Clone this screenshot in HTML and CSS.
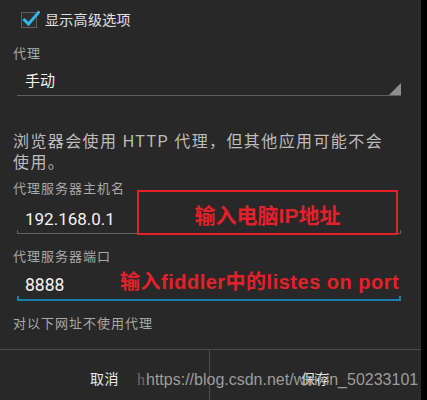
FILE: index.html
```html
<!DOCTYPE html>
<html lang="zh-CN">
<head>
<meta charset="utf-8">
<title>代理设置</title>
<link rel="stylesheet" href="styles.css">
</head>
<body>
<div class="screen">
  <div class="check-row">
    <svg class="checkbox" width="20" height="20" viewBox="0 0 20 20">
      <rect x="1.5" y="2.5" width="15" height="15" fill="#2e2e2e" stroke="#5c5c5c" stroke-width="1"/>
      <polyline points="4.5,10 8.5,14 18.5,2.5" fill="none" stroke="#33b5e5" stroke-width="3" stroke-linecap="square"/>
    </svg>
    <span class="check-label">显示高级选项</span>
  </div>

  <div class="label label-proxy">代理</div>
  <div class="spinner"><span class="spinner-value">手动</span></div>

  <p class="desc">浏览器会使用 HTTP 代理，但其他应用可能不会使用。</p>

  <div class="label label-host">代理服务器主机名</div>
  <div class="input">192.168.0.1</div>

  <div class="label label-port">代理服务器端口</div>
  <div class="input input-focused">8888</div>

  <div class="label label-exclude">对以下网址不使用代理</div>

  <div class="buttons">
    <div class="btn">取消</div>
    <div class="btn btn-right">保存</div>
  </div>

  <div class="note note-box">输入电脑IP地址</div>
  <div class="note note-port">输入fiddler中的listes on port</div>
  <div class="watermark"><span class="ghost">h</span>https://blog.csdn.net/weixin_50233101</div>
</div>
</body>
</html>
```
FILE: styles.css
```css
html, body {
  margin: 0;
  padding: 0;
  background: #000;
}

.screen {
  position: relative;
  width: 421px;
  height: 400px;
  overflow: hidden;
  background: #282828;
  display: flex;
  flex-direction: column;
  font-family: Roboto, "Noto Sans CJK SC", sans-serif;
  color: #e6e6e6;
}

.screen > * {
  flex-shrink: 0;
}

.check-row {
  height: 38px;
  display: flex;
  align-items: center;
  padding-left: 20px;
}

.checkbox {
  display: block;
  margin-top: 1px;
}

.check-label {
  margin-left: 5px;
  font-size: 14px;
  letter-spacing: 0.3px;
  color: #e2e2e2;
}

.label {
  padding-left: 13px;
  height: 20px;
  line-height: 20px;
  font-size: 13px;
  letter-spacing: 1px;
  color: #a9a9a9;
}

.label-proxy { margin-top: 6px; }

.spinner {
  position: relative;
  margin: 0 20px 0 17px;
  height: 31px;
  border-bottom: 1px solid #5e5e5e;
  padding-left: 8px;
  box-sizing: content-box;
}

.spinner::after {
  content: "";
  position: absolute;
  right: 0;
  bottom: 0;
  width: 0;
  height: 0;
  border-left: 12px solid transparent;
  border-bottom: 12px solid #8e8e8e;
}

.spinner-value {
  display: block;
  padding-top: 7px;
  line-height: 20px;
  font-size: 15px;
  color: #f0f0f0;
}

.desc {
  margin: 35px 0 0;
  padding: 0 26px 0 13px;
  font-size: 16px;
  line-height: 21px;
  letter-spacing: 1.4px;
  color: #bcbcbc;
}

.label-host { margin-top: 6px; }

.input {
  position: relative;
  margin: 0 20px 0 17px;
  padding: 10px 0 4px 8px;
  line-height: 20px;
  font-size: 17px;
  color: #f2f2f2;
  border-bottom: 1px solid #626262;
}

.input::before,
.input::after {
  content: "";
  position: absolute;
  bottom: -1px;
  width: 1px;
  height: 4px;
  background: #626262;
}

.input::before { left: 0; }
.input::after { right: 0; }

.label-port { margin-top: 13px; }

.input-focused {
  padding-top: 8px;
  padding-bottom: 4px;
  font-size: 17.5px;
  border-bottom: 2px solid #1a7fab;
}

.input-focused::before,
.input-focused::after {
  bottom: -2px;
  width: 2px;
  height: 5px;
  background: #1a7fab;
}

.label-exclude {
  margin-top: 13px;
  font-size: 13px;
}

.buttons {
  margin-top: 15px;
  height: 56px;
  border-top: 1px solid #4c4c4c;
  display: grid;
  grid-template-columns: 209px 1fr;
}

.btn {
  display: flex;
  align-items: center;
  justify-content: center;
  font-size: 14px;
  letter-spacing: 0.5px;
  color: #e8e8e8;
}

.btn-right {
  border-left: 1px solid #4c4c4c;
}

.note {
  position: absolute;
  font-family: "Liberation Sans", "Noto Sans CJK SC", sans-serif;
  font-weight: 700;
  font-size: 20px;
  color: #e5202a;
  white-space: nowrap;
}

.note-box {
  left: 137px;
  top: 190px;
  width: 257px;
  border: 2px solid #e5202a;
  display: flex;
  align-items: center;
  justify-content: center;
  padding-top: 2px;
  box-sizing: content-box;
  height: 39px;
  font-size: 21px;
}

.note-port {
  left: 120px;
  top: 270px;
  line-height: 24px;
  letter-spacing: 0.5px;
}

.watermark {
  position: absolute;
  left: 137px;
  top: 370px;
  font-family: "Liberation Sans", sans-serif;
  font-size: 16px;
  line-height: 20px;
  color: #9c9c9c;
  white-space: nowrap;
}

.ghost {
  font-family: "Liberation Serif", serif;
  color: #6a6a6a;
  margin-right: 1px;
}
```
